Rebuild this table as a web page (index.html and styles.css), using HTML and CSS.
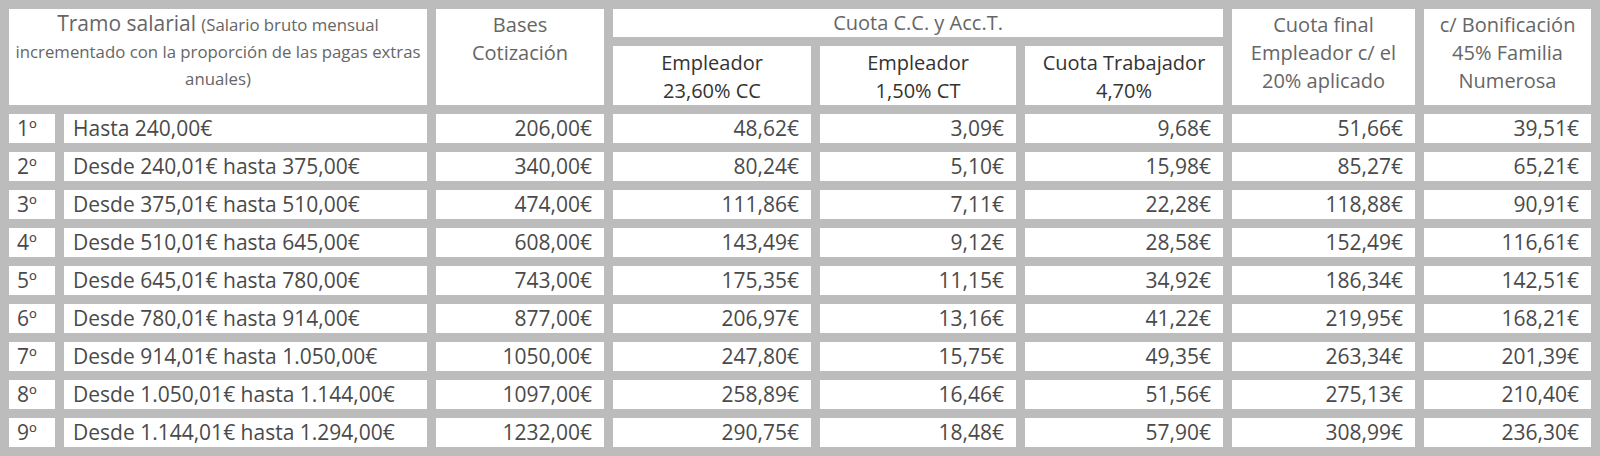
FILE: index.html
```html
<!DOCTYPE html>
<html lang="es">
<head>
<meta charset="utf-8">
<title>Tramos salariales</title>
<link rel="stylesheet" href="styles.css">
</head>
<body>
<table class="tabla">
  <colgroup>
    <col class="c-num"><col class="c-tramo"><col class="c-base"><col class="c-e1"><col class="c-e2"><col class="c-trab"><col class="c-final"><col class="c-bonif">
  </colgroup>
  <thead>
    <tr class="h1">
      <th colspan="2" rowspan="2" class="th-tramo"><span class="big">Tramo salarial</span> <span class="small">(Salario bruto mensual<br>incrementado con la proporción de las pagas extras<br>anuales)</span></th>
      <th rowspan="2" class="th-side">Bases<br>Cotización</th>
      <th colspan="3" class="th-group">Cuota C.C. y Acc.T.</th>
      <th rowspan="2" class="th-side">Cuota final<br>Empleador c/ el<br>20% aplicado</th>
      <th rowspan="2" class="th-side">c/ Bonificación<br>45% Familia<br>Numerosa</th>
    </tr>
    <tr class="h2">
      <th class="sub">Empleador<br>23,60% CC</th>
      <th class="sub">Empleador<br>1,50% CT</th>
      <th class="sub">Cuota Trabajador<br>4,70%</th>
    </tr>
  </thead>
  <tbody>
    <tr><td class="n">1º</td><td class="t">Hasta 240,00€</td><td>206,00€</td><td>48,62€</td><td>3,09€</td><td>9,68€</td><td>51,66€</td><td>39,51€</td></tr>
    <tr><td class="n">2º</td><td class="t">Desde 240,01€ hasta 375,00€</td><td>340,00€</td><td>80,24€</td><td>5,10€</td><td>15,98€</td><td>85,27€</td><td>65,21€</td></tr>
    <tr><td class="n">3º</td><td class="t">Desde 375,01€ hasta 510,00€</td><td>474,00€</td><td>111,86€</td><td>7,11€</td><td>22,28€</td><td>118,88€</td><td>90,91€</td></tr>
    <tr><td class="n">4º</td><td class="t">Desde 510,01€ hasta 645,00€</td><td>608,00€</td><td>143,49€</td><td>9,12€</td><td>28,58€</td><td>152,49€</td><td>116,61€</td></tr>
    <tr><td class="n">5º</td><td class="t">Desde 645,01€ hasta 780,00€</td><td>743,00€</td><td>175,35€</td><td>11,15€</td><td>34,92€</td><td>186,34€</td><td>142,51€</td></tr>
    <tr><td class="n">6º</td><td class="t">Desde 780,01€ hasta 914,00€</td><td>877,00€</td><td>206,97€</td><td>13,16€</td><td>41,22€</td><td>219,95€</td><td>168,21€</td></tr>
    <tr><td class="n">7º</td><td class="t">Desde 914,01€ hasta 1.050,00€</td><td>1050,00€</td><td>247,80€</td><td>15,75€</td><td>49,35€</td><td>263,34€</td><td>201,39€</td></tr>
    <tr><td class="n">8º</td><td class="t">Desde 1.050,01€ hasta 1.144,00€</td><td>1097,00€</td><td>258,89€</td><td>16,46€</td><td>51,56€</td><td>275,13€</td><td>210,40€</td></tr>
    <tr><td class="n">9º</td><td class="t">Desde 1.144,01€ hasta 1.294,00€</td><td>1232,00€</td><td>290,75€</td><td>18,48€</td><td>57,90€</td><td>308,99€</td><td>236,30€</td></tr>
    <tr class="next"><td></td><td></td><td></td><td></td><td></td><td></td><td></td><td></td></tr>
  </tbody>
</table>
</body>
</html>
```

FILE: styles.css
```css
html, body {
  margin: 0;
  padding: 0;
  background: #bcbcbc;
  overflow: hidden;
}

.tabla {
  table-layout: fixed;
  width: 1600px;
  border-collapse: separate;
  border-spacing: 9px;
  font-family: "Open Sans", "DejaVu Sans", sans-serif;
  font-size: 21px;
  color: #4a4a4a;
}

.c-num { width: 46px; }
.c-tramo { width: 363px; }
.c-base { width: 168px; }
.c-e1 { width: 198px; }
.c-e2 { width: 196px; }
.c-trab { width: 198px; }
.c-final { width: 183px; }
.c-bonif { width: 167px; }

th, td {
  background: #fff;
  padding: 0;
}

th {
  font-weight: normal;
  vertical-align: top;
  text-align: center;
  line-height: 28px;
  font-size: 20px;
  color: #666;
}

.h1 th.th-group {
  height: 28px;
}

.th-side {
  padding-top: 2px;
}

.h2 th {
  height: 55px;
  padding-top: 3px;
}

.sub {
  color: #333;
}

.th-tramo {
  line-height: 26px;
  padding-top: 1px;
}

.th-tramo .big {
  font-size: 21px;
}

.th-tramo .small {
  font-size: 16.8px;
}

td {
  height: 29px;
  line-height: 29px;
  text-align: right;
  padding: 0 12px 0 9px;
  white-space: nowrap;
}

td.n {
  padding-left: 8px;
}

td.n, td.t {
  text-align: left;
}
```
